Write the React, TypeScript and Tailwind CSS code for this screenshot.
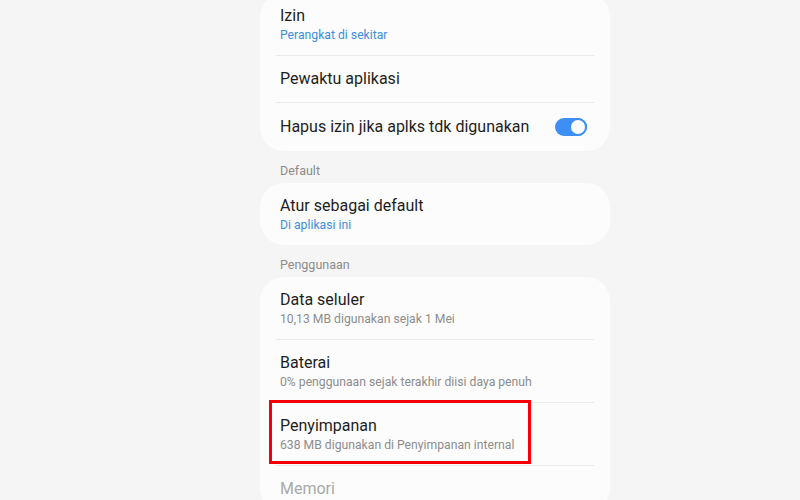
import React from 'react';

type Row = {
  title: string;
  sub?: string;
  subBlue?: boolean;
  toggle?: boolean;
  muted?: boolean;
  marked?: boolean;
};

const Toggle = () => (
  <div className="relative w-[32px] h-[18px] rounded-full bg-[#3d8ef5]">
    <div className="absolute right-0 top-0 w-[18px] h-[18px] rounded-full bg-white border-[2px] border-[#3d8ef5]" />
  </div>
);

const SettingRow = ({ row }: { row: Row }) => {
  let pad = 'relative px-5 pt-3 pb-[11px]';
  if (!row.sub) pad = row.toggle ? 'relative px-5 py-[13px] flex items-center justify-between' : 'relative px-5 py-3';
  return (
    <div className={pad}>
      <div>
        <div className={row.muted ? 'text-[16px] leading-[22px] text-[#a9a9a9]' : 'text-[16px] leading-[22px] text-[#1e1e1e]'}>
          {row.title}
        </div>
        {row.sub && (
          <div className={row.subBlue ? 'text-[12.2px] leading-[17px] text-[#3b8ee0]' : 'text-[12.2px] leading-[17px] text-[#8d8d8d]'}>
            {row.sub}
          </div>
        )}
      </div>
      {row.toggle && <div className="mr-[3px]"><Toggle /></div>}
      {row.marked && (
        <div className="absolute left-[9px] top-[-3px] w-[262px] h-[64px] border-[3px] border-[#f80000]" />
      )}
    </div>
  );
};

const Card = ({ rows }: { rows: Row[] }) => (
  <div className="bg-[#fcfcfc] rounded-[24px]">
    {rows.map((row, i) => (
      <div key={row.title}>
        {i > 0 && <div className="mx-4 h-px bg-[#ebebeb]" />}
        <SettingRow row={row} />
      </div>
    ))}
  </div>
);

const Header = ({ label }: { label: string }) => (
  <div className="px-5 pt-[12px] pb-[4px] text-[12.5px] leading-[16px] text-[#8b8b8b]">{label}</div>
);

export default function App() {
  return (
    <div className="w-full h-[500px] bg-[#f5f5f5] overflow-hidden font-['Roboto',sans-serif]">
      <div className="ml-[260px] w-[350px] mt-[-7px]">
        <Card
          rows={[
            { title: 'Izin', sub: 'Perangkat di sekitar', subBlue: true },
            { title: 'Pewaktu aplikasi' },
            { title: 'Hapus izin jika aplks tdk digunakan', toggle: true },
          ]}
        />
        <Header label="Default" />
        <Card rows={[{ title: 'Atur sebagai default', sub: 'Di aplikasi ini', subBlue: true }]} />
        <Header label="Penggunaan" />
        <Card
          rows={[
            { title: 'Data seluler', sub: '10,13 MB digunakan sejak 1 Mei' },
            { title: 'Baterai', sub: '0% penggunaan sejak terakhir diisi daya penuh' },
            { title: 'Penyimpanan', sub: '638 MB digunakan di Penyimpanan internal', marked: true },
            { title: 'Memori', muted: true },
          ]}
        />
      </div>
    </div>
  );
}
